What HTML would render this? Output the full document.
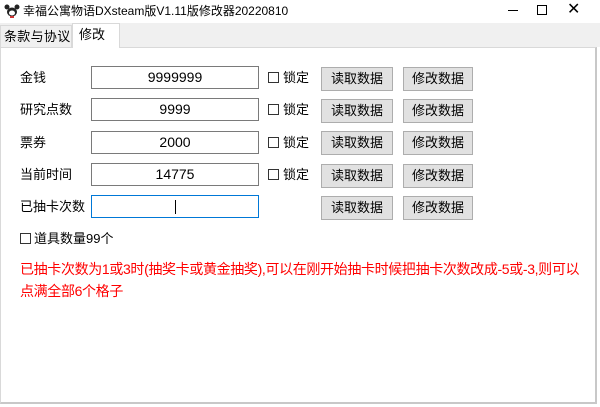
<!DOCTYPE html>
<html><head><meta charset="utf-8"><style>
*{margin:0;padding:0;box-sizing:border-box}
body{width:600px;height:407px;background:#fff;font-family:"Liberation Sans","Noto Sans CJK SC",sans-serif;font-size:13px;color:#000;position:relative;overflow:hidden}
.a{position:absolute;white-space:nowrap;line-height:16px}
.inp{position:absolute;left:91px;width:168px;height:23px;border:1px solid #7a7a7a;background:#fff;text-align:center;line-height:21px;font-size:14px}
.cb{position:absolute;width:11px;height:11px;border:1px solid #333;background:#fff}
.btn{position:absolute;height:24px;background:#e1e1e1;border:1px solid #adadad;text-align:center;line-height:22px;font-size:13px}
</style></head><body>
<div class="a" style="left:0;top:0;width:600px;height:23px;background:#fff"></div>
<svg class="a" style="left:4px;top:4px" width="16" height="14" viewBox="0 0 16 14"><circle cx="3" cy="3" r="2.5" fill="#222"/><circle cx="13" cy="3" r="2.5" fill="#222"/><ellipse cx="8" cy="8" rx="5" ry="4.5" fill="#222"/><ellipse cx="8" cy="9" rx="3" ry="2.5" fill="#fff"/><rect x="6" y="12" width="4" height="2" fill="#c33"/></svg>
<div class="a" style="left:23px;top:3px;font-size:12px">幸福公寓物语DXsteam版V1.11版修改器20220810</div>
<div class="a" style="left:508px;top:10px;width:10px;height:1px;background:#000"></div>
<div class="a" style="left:537px;top:5px;width:10px;height:10px;border:1px solid #000"></div>
<div class="a" style="left:567px;top:2px;font-size:16px;font-weight:300">✕</div>
<div class="a" style="left:0;top:23px;width:600px;height:24px;background:#f0f0f0"></div>
<div class="a" style="left:0;top:25px;width:72px;height:22px;border:1px solid #d9d9d9;border-bottom:none;background:#f0f0f0;line-height:21px;padding-left:3px;font-size:13px;letter-spacing:0.3px">条款与协议</div>
<div class="a" style="left:72px;top:23px;width:48px;height:25px;background:#fff;border:1px solid #d9d9d9;border-bottom:none;line-height:22px;padding-left:6px;font-size:13px">修改</div>
<div class="a" style="left:0;top:47px;width:597px;height:357px;border:1px solid #d9d9d9;border-right:2px solid #c8c8c8;border-bottom:2px solid #c8c8c8;background:#fff"></div>
<div class="a" style="left:73px;top:47px;width:46px;height:2px;background:#fff"></div>

<div class="a" style="left:20px;top:70px">金钱</div>
<div class="a" style="left:20px;top:102px">研究点数</div>
<div class="a" style="left:20px;top:135px">票券</div>
<div class="a" style="left:20px;top:167px">当前时间</div>
<div class="a" style="left:20px;top:199px">已抽卡次数</div>

<div class="inp" style="top:66px">9999999</div>
<div class="inp" style="top:98px">9999</div>
<div class="inp" style="top:131px">2000</div>
<div class="inp" style="top:163px">14775</div>
<div class="inp" style="top:195px;border-color:#0078d7"><span style="display:inline-block;width:1px;height:14px;background:#000;vertical-align:middle"></span></div>

<div class="cb" style="left:268px;top:72px"></div><div class="a" style="left:283px;top:70px">锁定</div>
<div class="cb" style="left:268px;top:104px"></div><div class="a" style="left:283px;top:102px">锁定</div>
<div class="cb" style="left:268px;top:137px"></div><div class="a" style="left:283px;top:135px">锁定</div>
<div class="cb" style="left:268px;top:169px"></div><div class="a" style="left:283px;top:167px">锁定</div>

<div class="btn" style="left:321px;top:67px;width:72px">读取数据</div>
<div class="btn" style="left:403px;top:67px;width:70px">修改数据</div>
<div class="btn" style="left:321px;top:99px;width:72px">读取数据</div>
<div class="btn" style="left:403px;top:99px;width:70px">修改数据</div>
<div class="btn" style="left:321px;top:131px;width:72px">读取数据</div>
<div class="btn" style="left:403px;top:131px;width:70px">修改数据</div>
<div class="btn" style="left:321px;top:164px;width:72px">读取数据</div>
<div class="btn" style="left:403px;top:164px;width:70px">修改数据</div>
<div class="btn" style="left:321px;top:196px;width:72px">读取数据</div>
<div class="btn" style="left:403px;top:196px;width:70px">修改数据</div>

<div class="cb" style="left:20px;top:233px"></div><div class="a" style="left:34px;top:231px">道具数量99个</div>
<div class="a" style="left:20px;top:258px;color:#ff0000;font-size:14px;line-height:22px;letter-spacing:-0.35px">已抽卡次数为1或3时(抽奖卡或黄金抽奖),可以在刚开始抽卡时候把抽卡次数改成-5或-3,则可以<br>点满全部6个格子</div>
</body></html>
